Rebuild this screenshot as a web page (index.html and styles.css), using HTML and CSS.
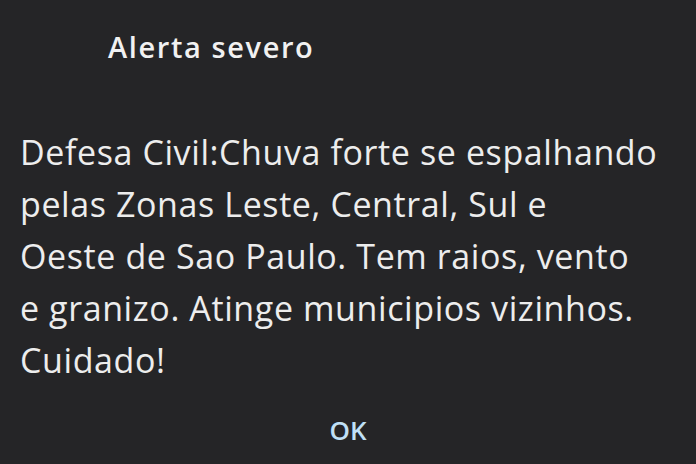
FILE: index.html
```html
<!DOCTYPE html>
<html lang="pt-BR">
<head>
    <meta charset="UTF-8">
    <meta name="viewport" content="width=device-width, initial-scale=1.0">
    <title>Alerta severo</title>
    <link rel="stylesheet" href="styles.css">
</head>
<body>

    <div class="dialog">
        <!-- Header -->
        <div class="title">Alerta severo</div>

        <!-- Alert message -->
        <div class="message">
            Defesa Civil:Chuva forte se espalhando<br>
            pelas Zonas Leste, Central, Sul e<br>
            Oeste de Sao Paulo. Tem raios, vento<br>
            e granizo. Atinge municipios vizinhos.<br>
            Cuidado!
        </div>

        <button class="ok-btn">OK</button>
    </div>

</body>
</html>
```

FILE: styles.css
```css
body, html {
    margin: 0;
    height: 100%;
    background-color: #252527;
    font-family: "Open Sans", Roboto, sans-serif;
}

.dialog {
    display: flex;
    flex-direction: column;
    height: 100%;
    box-sizing: border-box;
    padding: 28px 0 0 20px;
}

/* Title */
.title {
    padding-left: 88px;
    font-size: 29px;
    font-weight: 600;
    letter-spacing: 1.6px;
    line-height: 38px;
    color: #f1f1f1;
}

.message {
    margin-top: 60px;
    font-size: 34px;
    line-height: 52px;
    letter-spacing: 0.6px;
    color: #ededed;
    white-space: nowrap;
}

/* OK button */
.ok-btn {
    align-self: center;
    margin: 20px 0 0 -20px;
    padding: 6px 16px;
    background: none;
    border: none;
    font-family: "Open Sans", Roboto, sans-serif;
    font-size: 26px;
    font-weight: 600;
    line-height: 36px;
    color: #c0e0f7;
    cursor: pointer;
}
```
